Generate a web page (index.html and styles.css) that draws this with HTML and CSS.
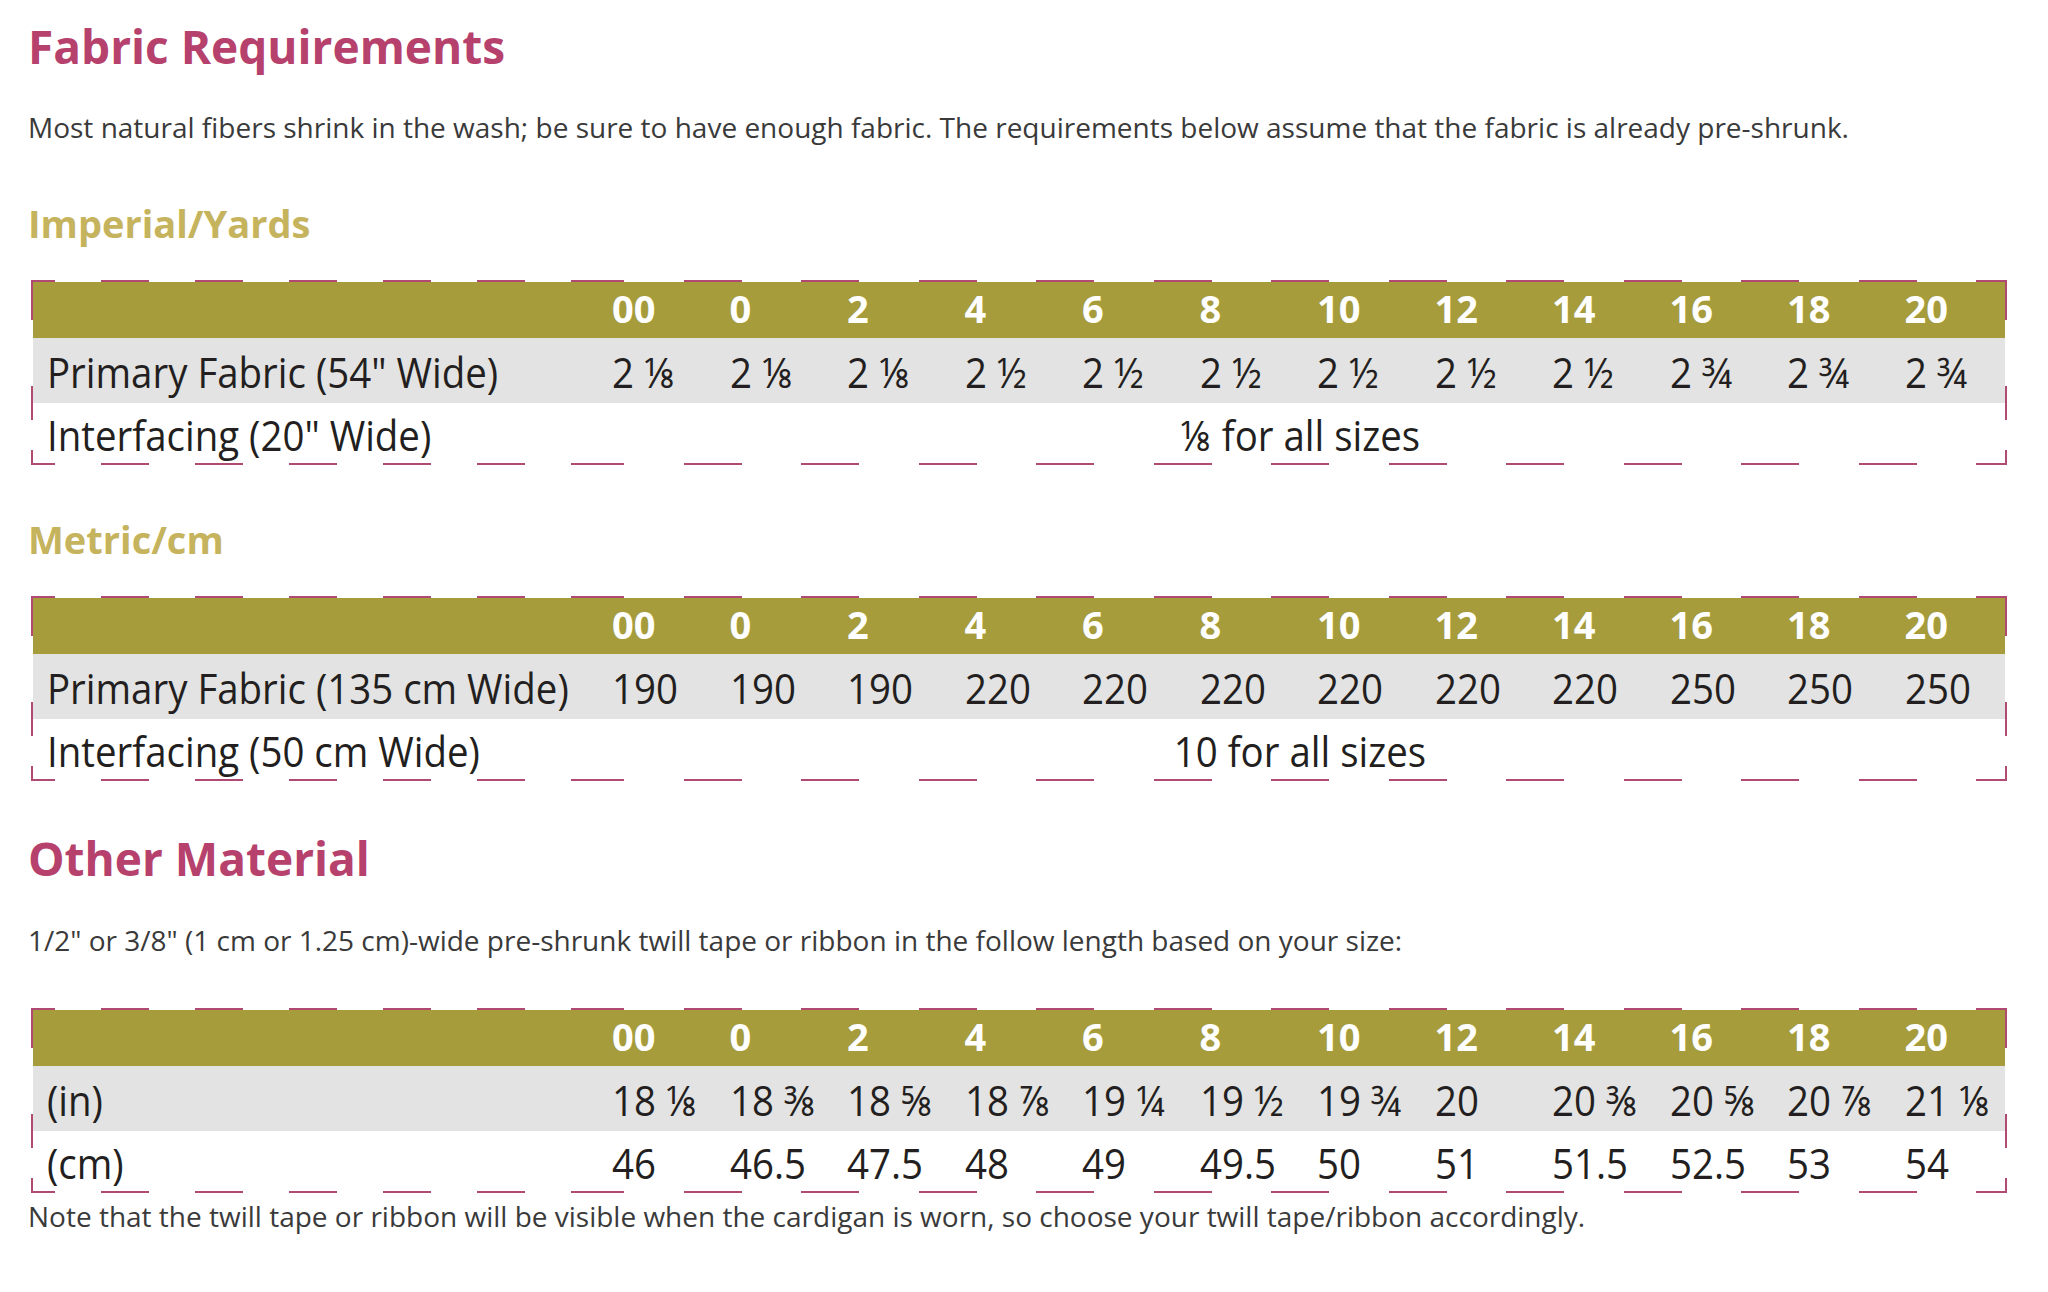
FILE: index.html
```html
<!DOCTYPE html>
<html lang="en">
<head>
<meta charset="utf-8">
<title>Fabric Requirements</title>
<link rel="stylesheet" href="styles.css">
</head>
<body>
<main class="page">
  <h1 class="title">Fabric Requirements</h1>
  <p class="intro">Most natural fibers shrink in the wash; be sure to have enough fabric. The requirements below assume that the fabric is already pre-shrunk.</p>

  <h2 class="sub sub-imperial">Imperial/Yards</h2>
  <div class="frame">
    <table class="req">
      <colgroup><col class="c-lab"><col span="12" class="c-val"></colgroup>
      <thead>
        <tr class="head"><th class="lab"></th><th>00</th><th>0</th><th>2</th><th>4</th><th>6</th><th>8</th><th>10</th><th>12</th><th>14</th><th>16</th><th>18</th><th>20</th></tr>
      </thead>
      <tbody>
        <tr class="grey"><td class="lab"><span class="t">Primary Fabric (54" Wide)</span></td><td><span class="t">2 ⅛</span></td><td><span class="t">2 ⅛</span></td><td><span class="t">2 ⅛</span></td><td><span class="t">2 ½</span></td><td><span class="t">2 ½</span></td><td><span class="t">2 ½</span></td><td><span class="t">2 ½</span></td><td><span class="t">2 ½</span></td><td><span class="t">2 ½</span></td><td><span class="t">2 ¾</span></td><td><span class="t">2 ¾</span></td><td><span class="t">2 ¾</span></td></tr>
        <tr class="white"><td class="lab"><span class="t">Interfacing (20" Wide)</span></td><td class="all" colspan="12"><span class="t">⅛ for all sizes</span></td></tr>
      </tbody>
    </table>
  </div>

  <h2 class="sub sub-metric">Metric/cm</h2>
  <div class="frame">
    <table class="req">
      <colgroup><col class="c-lab"><col span="12" class="c-val"></colgroup>
      <thead>
        <tr class="head"><th class="lab"></th><th>00</th><th>0</th><th>2</th><th>4</th><th>6</th><th>8</th><th>10</th><th>12</th><th>14</th><th>16</th><th>18</th><th>20</th></tr>
      </thead>
      <tbody>
        <tr class="grey"><td class="lab"><span class="t">Primary Fabric (135 cm Wide)</span></td><td><span class="t">190</span></td><td><span class="t">190</span></td><td><span class="t">190</span></td><td><span class="t">220</span></td><td><span class="t">220</span></td><td><span class="t">220</span></td><td><span class="t">220</span></td><td><span class="t">220</span></td><td><span class="t">220</span></td><td><span class="t">250</span></td><td><span class="t">250</span></td><td><span class="t">250</span></td></tr>
        <tr class="white"><td class="lab"><span class="t">Interfacing (50 cm Wide)</span></td><td class="all" colspan="12"><span class="t">10 for all sizes</span></td></tr>
      </tbody>
    </table>
  </div>

  <h1 class="title title-other">Other Material</h1>
  <p class="intro intro-other">1/2" or 3/8" (1 cm or 1.25 cm)-wide pre-shrunk twill tape or ribbon in the follow length based on your size:</p>
  <div class="frame frame-other">
    <table class="req">
      <colgroup><col class="c-lab"><col span="12" class="c-val"></colgroup>
      <thead>
        <tr class="head"><th class="lab"></th><th>00</th><th>0</th><th>2</th><th>4</th><th>6</th><th>8</th><th>10</th><th>12</th><th>14</th><th>16</th><th>18</th><th>20</th></tr>
      </thead>
      <tbody>
        <tr class="grey"><td class="lab"><span class="t">(in)</span></td><td><span class="t">18 ⅛</span></td><td><span class="t">18 ⅜</span></td><td><span class="t">18 ⅝</span></td><td><span class="t">18 ⅞</span></td><td><span class="t">19 ¼</span></td><td><span class="t">19 ½</span></td><td><span class="t">19 ¾</span></td><td><span class="t">20</span></td><td><span class="t">20 ⅜</span></td><td><span class="t">20 ⅝</span></td><td><span class="t">20 ⅞</span></td><td><span class="t">21 ⅛</span></td></tr>
        <tr class="white"><td class="lab"><span class="t">(cm)</span></td><td><span class="t">46</span></td><td><span class="t">46.5</span></td><td><span class="t">47.5</span></td><td><span class="t">48</span></td><td><span class="t">49</span></td><td><span class="t">49.5</span></td><td><span class="t">50</span></td><td><span class="t">51</span></td><td><span class="t">51.5</span></td><td><span class="t">52.5</span></td><td><span class="t">53</span></td><td><span class="t">54</span></td></tr>
      </tbody>
    </table>
  </div>
  <p class="note">Note that the twill tape or ribbon will be visible when the cardigan is worn, so choose your twill tape/ribbon accordingly.</p>
</main>
</body>
</html>
```

FILE: styles.css
```css
html, body {
  margin: 0;
  padding: 0;
  background: #ffffff;
}

.page {
  padding: 0 41px 40px 28px;
  font-family: "Open Sans", "Noto Sans", sans-serif;
  color: #3a3a3a;
}

.title {
  margin: 16px 0 0;
  font-size: 46px;
  line-height: 60px;
  font-weight: 700;
  color: #b6416c;
}

.intro {
  margin: 33px 0 0;
  font-size: 28px;
  line-height: 36px;
  font-weight: 400;
  color: #3a3a3a;
}

.sub {
  margin: 0;
  font-size: 38px;
  line-height: 50px;
  font-weight: 700;
  color: #c5b35d;
}

.sub-imperial { margin-top: 53px; }
.sub-metric { margin-top: 49px; }

.frame {
  --dash: #b14a73;
  margin: 32px 0 0 3px;
  padding: 2px;
  background:
    repeating-linear-gradient(90deg, var(--dash) 0 24px, transparent 24px 70px, var(--dash) 70px 94px) 0 0 / 564px 2px no-repeat,
    repeating-linear-gradient(90deg, var(--dash) 0 24px, transparent 24px 70px, var(--dash) 70px 94px) 0 100% / 564px 2px no-repeat,
    repeating-linear-gradient(90deg, var(--dash) 0 29px, transparent 29px 88.5px, var(--dash) 88.5px 117.5px) 564px 0 / calc(100% - 564px) 2px no-repeat,
    repeating-linear-gradient(90deg, var(--dash) 0 29px, transparent 29px 88.5px, var(--dash) 88.5px 117.5px) 564px 100% / calc(100% - 564px) 2px no-repeat,
    linear-gradient(180deg, var(--dash) 0 40px, transparent 40px 106px, var(--dash) 106px 140px, transparent 140px calc(100% - 15px), var(--dash) calc(100% - 15px)) 0 0 / 2px 100% no-repeat,
    linear-gradient(180deg, var(--dash) 0 40px, transparent 40px 106px, var(--dash) 106px 140px, transparent 140px calc(100% - 15px), var(--dash) calc(100% - 15px)) 100% 0 / 2px 100% no-repeat;
}

.req {
  width: 100%;
  table-layout: fixed;
  border-collapse: collapse;
  border-spacing: 0;
  font-family: "Open Sans", "Noto Sans", sans-serif;
  color: #231f20;
}

.c-lab { width: 562px; }
.c-val { width: 117.5px; }

.req th,
.req td {
  padding: 0 0 0 17px;
  text-align: left;
  white-space: nowrap;
  vertical-align: top;
}

.req .lab { padding-left: 14px; }

.t {
  display: inline-block;
  transform: scaleX(0.915);
  transform-origin: 0 50%;
}

.head {
  background: #a69c3c;
}

.head th {
  height: 53px;
  padding-bottom: 3px;
  font-size: 38px;
  line-height: 53px;
  font-weight: 700;
  color: #ffffff;
}

.grey {
  background: #e3e3e3;
}

.grey td {
  padding-top: 3px;
  height: 62px;
  font-size: 42px;
  line-height: 62px;
  font-weight: 400;
}

.white td {
  padding-top: 4px;
  height: 56px;
  font-size: 42px;
  line-height: 56px;
  font-weight: 400;
}

.req td.all {
  padding-left: 0;
  text-align: center;
}

.req td.all .t {
  transform-origin: 50% 50%;
}

.title-other { margin-top: 47px; }
.intro-other { margin-top: 34px; }
.frame-other { margin-top: 50px; }

.note {
  margin: 5px 0 0;
  font-size: 28px;
  line-height: 36px;
  color: #3a3a3a;
}
```
